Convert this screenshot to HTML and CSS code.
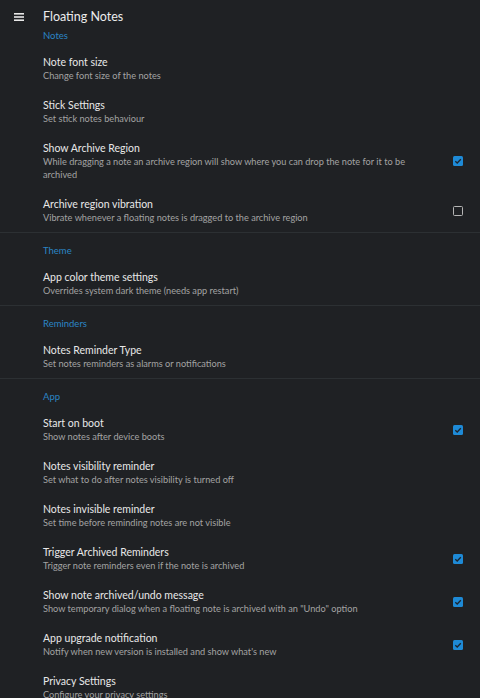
FILE: index.html
```html
<!DOCTYPE html>
<html>
<head>
<meta charset="utf-8">
<link rel="stylesheet" href="styles.css">
</head>
<body>
<header class="appbar">
  <svg class="menu" width="12" height="10" viewBox="0 0 12 10"><rect x="1" y="1" width="10" height="1.6" fill="#e8e8e8"/><rect x="1" y="4.2" width="10" height="1.6" fill="#e8e8e8"/><rect x="1" y="7.4" width="10" height="1.6" fill="#e8e8e8"/></svg>
  <h1 class="title">Floating Notes</h1>
</header>
<main class="list">
  <section class="cat first">
    <div class="cat-title">Notes</div>
    <div class="item"><div class="text"><div class="t">Note font size</div><div class="s">Change font size of the notes</div></div></div>
    <div class="item"><div class="text"><div class="t">Stick Settings</div><div class="s">Set stick notes behaviour</div></div></div>
    <div class="item"><div class="text"><div class="t">Show Archive Region</div><div class="s">While dragging a note an archive region will show where you can drop the note for it to be archived</div></div><div class="widget"><span class="cb on"><svg viewBox="0 0 10 10"><path d="M2.3 5.2 L4.2 7 L7.8 3.2" fill="none" stroke="#1b2530" stroke-width="1.3"/></svg></span></div></div>
    <div class="item"><div class="text"><div class="t">Archive region vibration</div><div class="s">Vibrate whenever a floating notes is dragged to the archive region</div></div><div class="widget"><span class="cb"></span></div></div>
  </section>
  <section class="cat">
    <div class="cat-title">Theme</div>
    <div class="item"><div class="text"><div class="t">App color theme settings</div><div class="s">Overrides system dark theme (needs app restart)</div></div></div>
  </section>
  <section class="cat">
    <div class="cat-title">Reminders</div>
    <div class="item"><div class="text"><div class="t">Notes Reminder Type</div><div class="s">Set notes reminders as alarms or notifications</div></div></div>
  </section>
  <section class="cat">
    <div class="cat-title">App</div>
    <div class="item"><div class="text"><div class="t">Start on boot</div><div class="s">Show notes after device boots</div></div><div class="widget"><span class="cb on"><svg viewBox="0 0 10 10"><path d="M2.3 5.2 L4.2 7 L7.8 3.2" fill="none" stroke="#1b2530" stroke-width="1.3"/></svg></span></div></div>
    <div class="item"><div class="text"><div class="t">Notes visibility reminder</div><div class="s">Set what to do after notes visibility is turned off</div></div></div>
    <div class="item"><div class="text"><div class="t">Notes invisible reminder</div><div class="s">Set time before reminding notes are not visible</div></div></div>
    <div class="item"><div class="text"><div class="t">Trigger Archived Reminders</div><div class="s">Trigger note reminders even if the note is archived</div></div><div class="widget"><span class="cb on"><svg viewBox="0 0 10 10"><path d="M2.3 5.2 L4.2 7 L7.8 3.2" fill="none" stroke="#1b2530" stroke-width="1.3"/></svg></span></div></div>
    <div class="item"><div class="text"><div class="t">Show note archived/undo message</div><div class="s">Show temporary dialog when a floating note is archived with an "Undo" option</div></div><div class="widget"><span class="cb on"><svg viewBox="0 0 10 10"><path d="M2.3 5.2 L4.2 7 L7.8 3.2" fill="none" stroke="#1b2530" stroke-width="1.3"/></svg></span></div></div>
    <div class="item"><div class="text"><div class="t">App upgrade notification</div><div class="s">Notify when new version is installed and show what's new</div></div><div class="widget"><span class="cb on"><svg viewBox="0 0 10 10"><path d="M2.3 5.2 L4.2 7 L7.8 3.2" fill="none" stroke="#1b2530" stroke-width="1.3"/></svg></span></div></div>
    <div class="item"><div class="text"><div class="t">Privacy Settings</div><div class="s">Configure your privacy settings</div></div></div>
  </section>
</main>
</body>
</html>
```
FILE: styles.css
```css
html, body {
  margin: 0;
  padding: 0;
  background: #1f2124;
  height: 100%;
  overflow: hidden;
}
body {
  font-family: "Lato", "Noto Sans", sans-serif;
  color: #e6e6e6;
}
.appbar {
  display: flex;
  align-items: center;
  height: 26px;
  padding-top: 4px;
}
.menu {
  display: block;
  margin-left: 13px;
  width: 12px;
  height: 10px;
}
.title {
  margin: 0 0 0 18px;
  font-size: 12.5px;
  font-weight: 400;
  color: #ececec;
  line-height: 16px;
}
.list {
  display: flex;
  flex-direction: column;
}
.cat {
  border-top: 1px solid #2c3033;
}
.cat.first {
  border-top: none;
}
.cat-title {
  padding: 12px 0 5px 43px;
  font-size: 9.5px;
  line-height: 12px;
  color: #2b85c4;
}
.cat.first .cat-title {
  padding-top: 0;
}
.item {
  display: flex;
  align-items: center;
  padding: 8px 4px 8px 43px;
}
.text {
  flex: 1;
  min-width: 0;
  padding-right: 20px;
}
.t {
  font-size: 10.5px;
  line-height: 14px;
  color: #e8e8e8;
}
.s {
  font-size: 9.2px;
  line-height: 13px;
  color: #a3a3a3;
}
.widget {
  width: 36px;
  display: flex;
  justify-content: center;
}
.cb {
  display: block;
  width: 10px;
  height: 10px;
  box-sizing: border-box;
  border: 1.5px solid #b5b5b5;
  border-radius: 1.5px;
}
.cb.on {
  border: none;
  background: #1e8ad6;
}
.cb svg {
  display: block;
  width: 10px;
  height: 10px;
}
```
